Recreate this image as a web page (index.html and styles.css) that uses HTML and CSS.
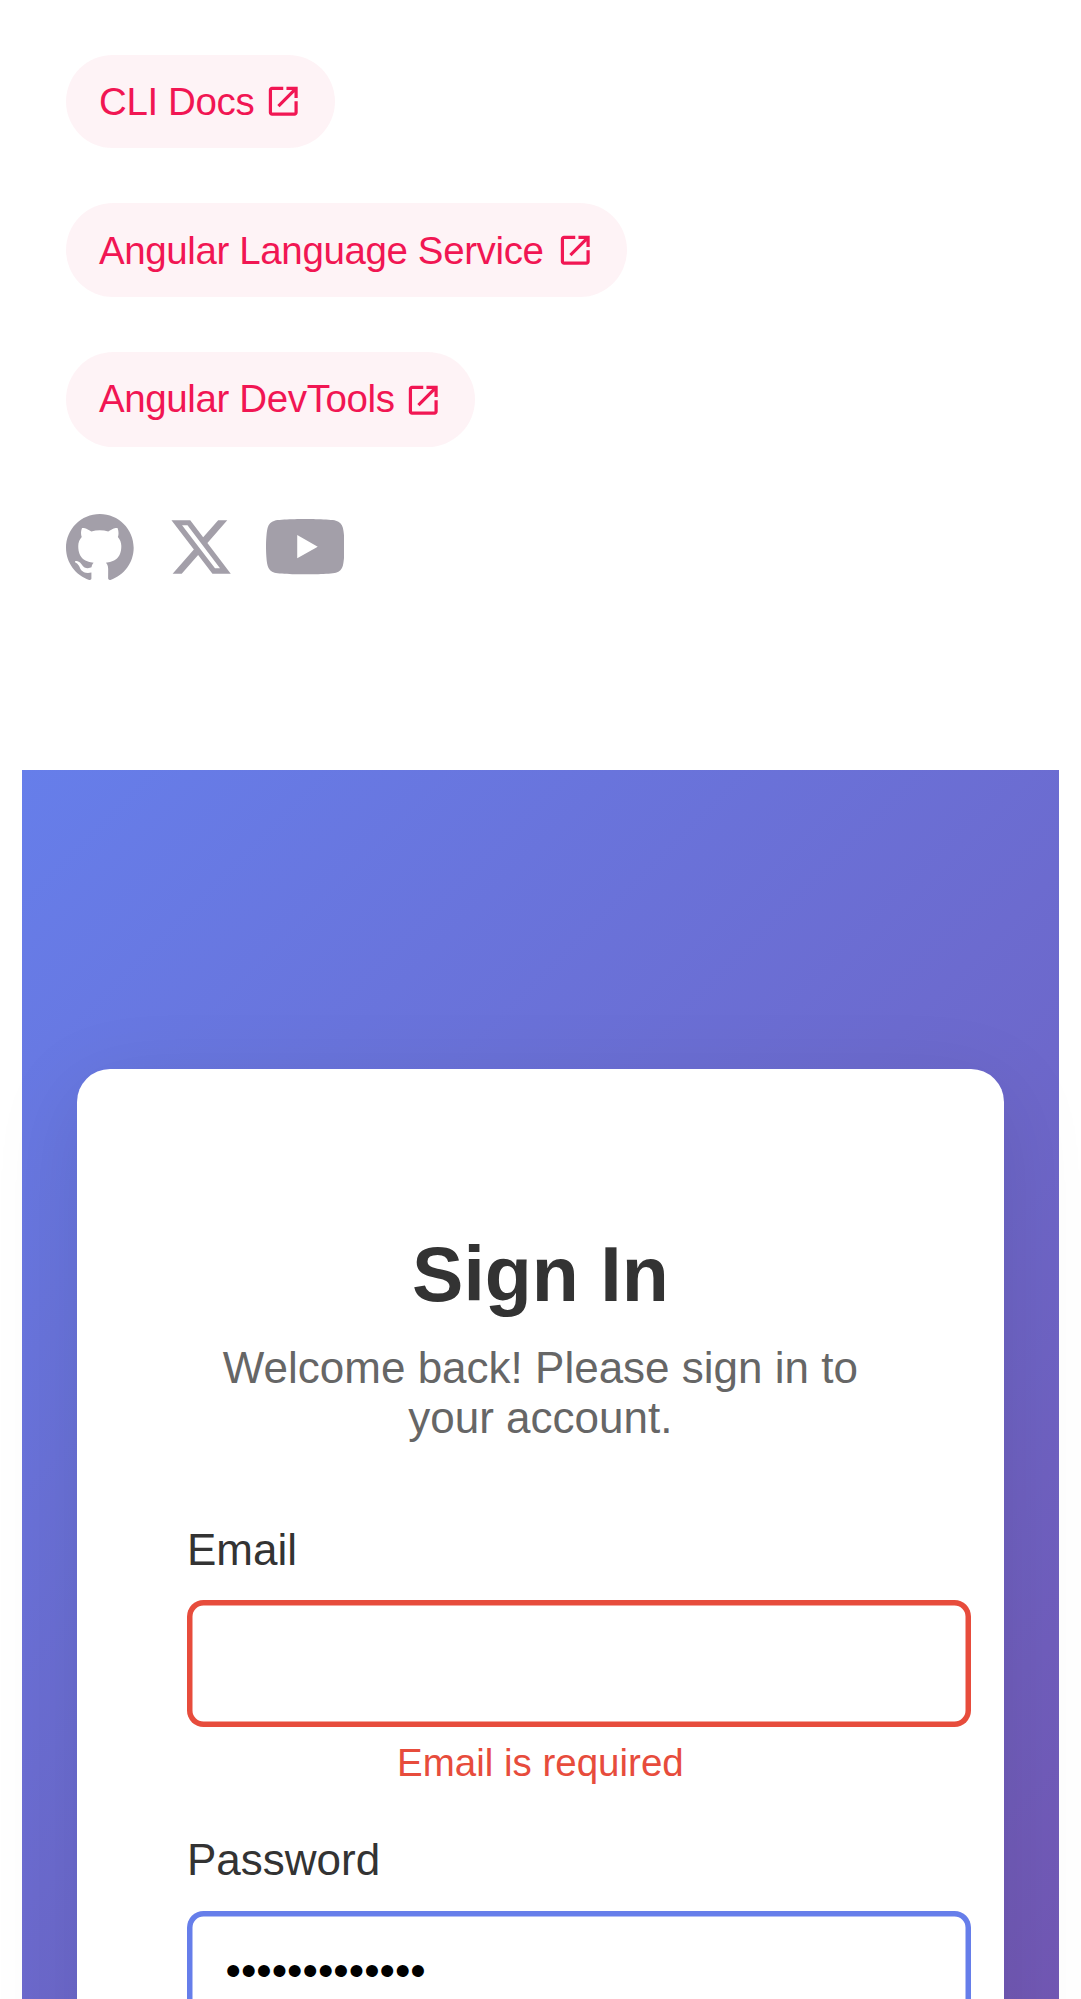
FILE: index.html
```html
<!DOCTYPE html>
<html lang="en">
<head>
<meta charset="utf-8">
<title>Sign In</title>
<link rel="stylesheet" href="styles.css">
</head>
<body>
<main class="links">
  <div class="pill-group">
    <a class="pill pill-cli"><span>CLI Docs</span>
      <svg class="pill-icon" viewBox="0 -960 960 960" fill="currentColor"><path d="M200-120q-33 0-56.5-23.5T120-200v-560q0-33 23.5-56.5T200-840h280v80H200v560h560v-280h80v280q0 33-23.5 56.5T760-120H200Zm188-212-56-56 372-372H560v-80h280v280h-80v-144L388-332Z"/></svg>
    </a>
    <a class="pill pill-language"><span>Angular Language Service</span>
      <svg class="pill-icon" viewBox="0 -960 960 960" fill="currentColor"><path d="M200-120q-33 0-56.5-23.5T120-200v-560q0-33 23.5-56.5T200-840h280v80H200v560h560v-280h80v280q0 33-23.5 56.5T760-120H200Zm188-212-56-56 372-372H560v-80h280v280h-80v-144L388-332Z"/></svg>
    </a>
    <a class="pill pill-devtools"><span>Angular DevTools</span>
      <svg class="pill-icon" viewBox="0 -960 960 960" fill="currentColor"><path d="M200-120q-33 0-56.5-23.5T120-200v-560q0-33 23.5-56.5T200-840h280v80H200v560h560v-280h80v280q0 33-23.5 56.5T760-120H200Zm188-212-56-56 372-372H560v-80h280v280h-80v-144L388-332Z"/></svg>
    </a>
  </div>
  <div class="social-links">
    <a aria-label="Github"><svg class="github" viewBox="0 0 25 24"><path d="M12.3047 0C5.50634 0 0 5.50942 0 12.3047C0 17.7423 3.52529 22.3535 8.41332 23.9787C9.02856 24.0946 9.25414 23.7142 9.25414 23.3871C9.25414 23.0949 9.24389 22.3207 9.23876 21.2953C5.81601 22.0377 5.09414 19.6444 5.09414 19.6444C4.53427 18.2243 3.72524 17.8449 3.72524 17.8449C2.61064 17.082 3.81137 17.0973 3.81137 17.0973C5.04697 17.1835 5.69604 18.3647 5.69604 18.3647C6.79321 20.2463 8.57636 19.7029 9.27978 19.3881C9.39052 18.5924 9.70736 18.0499 10.0591 17.7423C7.32641 17.4347 4.45429 16.3765 4.45429 11.6618C4.45429 10.3185 4.9311 9.22133 5.72065 8.36C5.58222 8.04931 5.16694 6.79833 5.82831 5.10337C5.82831 5.10337 6.85883 4.77319 9.2121 6.36459C10.1965 6.09082 11.2424 5.95546 12.2883 5.94931C13.3342 5.95546 14.3801 6.09082 15.3644 6.36459C17.7023 4.77319 18.7328 5.10337 18.7328 5.10337C19.3942 6.79833 18.9789 8.04931 18.8559 8.36C19.6403 9.22133 20.1171 10.3185 20.1171 11.6618C20.1171 16.3888 17.2409 17.4296 14.5031 17.7321C14.9338 18.1012 15.3337 18.8559 15.3337 20.0084C15.3337 21.6552 15.3183 22.978 15.3183 23.3779C15.3183 23.7009 15.5336 24.0854 16.1642 23.9623C21.0871 22.3484 24.6094 17.7341 24.6094 12.3047C24.6094 5.50942 19.0999 0 12.3047 0Z"/></svg></a>
    <a aria-label="X"><svg class="x" viewBox="0 0 24 24"><path d="M18.244 2.25h3.308l-7.227 8.26 8.502 11.24H16.17l-5.214-6.817L4.99 21.75H1.68l7.73-8.835L1.254 2.25H8.08l4.713 6.231zm-1.161 17.52h1.833L7.084 4.126H5.117z"/></svg></a>
    <a aria-label="Youtube"><svg class="youtube" viewBox="0 3.545 24 16.91"><path d="M23.498 6.186a3.016 3.016 0 0 0-2.122-2.136C19.505 3.545 12 3.545 12 3.545s-7.505 0-9.377.505A3.017 3.017 0 0 0 .502 6.186C0 8.07 0 12 0 12s0 3.93.502 5.814a3.016 3.016 0 0 0 2.122 2.136c1.871.505 9.376.505 9.376.505s7.505 0 9.377-.505a3.015 3.015 0 0 0 2.122-2.136C24 15.93 24 12 24 12s0-3.93-.502-5.814zM9.545 15.568V8.432L15.818 12l-6.273 3.568z"/></svg></a>
  </div>
</main>
<section class="signin">
  <form class="card">
    <h1 class="title">Sign In</h1>
    <p class="subtitle">Welcome back! Please sign in to your account.</p>
    <div class="field">
      <label class="label" for="email">Email</label>
      <input class="input input-invalid" id="email" type="email">
      <p class="error">Email is required</p>
    </div>
    <div class="field">
      <label class="label" for="password">Password</label>
      <input class="input input-active" id="password" type="password" value="password12345">
    </div>
  </form>
</section>
</body>
</html>
```

FILE: styles.css
```css
html {
  font-size: 44px;
  background: #fff;
}

body {
  margin: 0;
  padding: 0 22.25px 0 22px;
  height: 1999px;
  box-sizing: border-box;
  overflow: hidden;
  font-family: "Liberation Sans", Arial, sans-serif;
}

.links {
  height: 769.6px;
  padding: 54.7px 1rem 0;
  box-sizing: border-box;
}

.pill-group {
  display: flex;
  flex-direction: column;
  align-items: flex-start;
  gap: 55px;
}

.pill {
  display: flex;
  align-items: center;
  height: 93.5px;
  padding: 0 0.75rem;
  border-radius: 2.75rem;
  font-size: 0.875rem;
  line-height: 1.4rem;
  letter-spacing: -0.00875rem;
  white-space: nowrap;
  color: oklch(61.42% 0.238 15.34);
  background: color-mix(in srgb, oklch(61.42% 0.238 15.34) 5%, transparent);
}

.pill-icon {
  width: 0.875rem;
  height: 0.875rem;
  margin-left: 0.25rem;
}

.pill-cli .pill-icon {
  margin-left: 9.7px;
}

.pill-language span {
  margin-top: 1.5px;
}

.pill-language .pill-icon {
  margin-left: 12px;
}

.pill-devtools {
  height: 95.7px;
}

.pill-devtools span {
  margin-top: -2px;
}

.pill-devtools .pill-icon {
  margin: 2px 0 0 9.3px;
}

.social-links {
  display: flex;
  align-items: center;
  gap: 0.75rem;
  margin-top: 66.6px;
}

.social-links a {
  display: flex;
}

.social-links svg {
  fill: oklch(70.9% 0.015 304.04);
}

.github {
  width: 68.75px;
  height: 66px;
}

.x {
  width: 66px;
  height: 66px;
}

.youtube {
  width: 78.5px;
  height: 55.3px;
  margin-left: -1px;
}

.signin {
  height: 1999px;
  padding: 299.7px 55px;
  box-sizing: border-box;
  background: linear-gradient(135deg, #667eea 0%, #764ba2 100%);
}

.card {
  height: 100%;
  padding: 161px 110px 110px;
  box-sizing: border-box;
  border-radius: 33px;
  background: #fff;
  box-shadow: 0 22px 88px rgba(0, 0, 0, 0.1);
  text-align: center;
}

.title {
  margin: 0 0 25px;
  font-size: 77px;
  line-height: 88px;
  color: #333;
}

.subtitle {
  margin: 0 0 82.5px;
  font-size: 44px;
  line-height: 49.5px;
  color: #666;
}

.field {
  margin-bottom: 50.4px;
}

.label {
  display: block;
  margin-bottom: 26px;
  font-size: 44px;
  line-height: 49.5px;
  text-align: left;
  color: #333;
}

.input {
  display: block;
  width: 783.75px;
  height: 126.5px;
  padding: 0 38.5px 6.5px;
  box-sizing: border-box;
  border: 0;
  border-radius: 16.5px;
  outline: 0;
  background: #fff;
  font: 44px "Liberation Sans", Arial, sans-serif;
  color: #000;
}

.input-invalid {
  box-shadow: inset 0 0 0 5.5px #e74c3c;
}

.input-active {
  box-shadow: inset 0 0 0 5.5px #667eea;
}

.error {
  margin: 14px 0 0;
  font-size: 38.5px;
  line-height: 44px;
  color: #e74c3c;
}
```
